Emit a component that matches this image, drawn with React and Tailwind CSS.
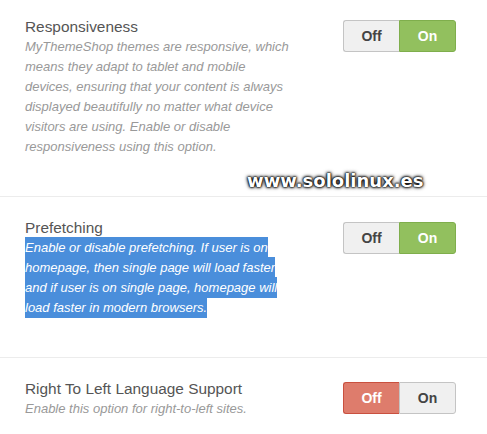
import React from "react";

function Toggle({ on }) {
  return (
    <div className="flex h-[32px] w-[113px] shrink-0 text-[14px] font-bold leading-none">
      <div
        className={
          on
            ? "flex w-[56px] items-center justify-center rounded-l-[3px] border border-r-0 border-[#c4c4c4] bg-[#f0f0f0] text-[#444]"
            : "flex w-[56px] items-center justify-center rounded-l-[3px] border border-r-0 border-[#c9503f] bg-[#de7c6c] text-white"
        }
      >
        Off
      </div>
      <div
        className={
          on
            ? "flex w-[57px] items-center justify-center rounded-r-[3px] border border-[#7fae4c] bg-[#92c05e] text-white"
            : "flex w-[57px] items-center justify-center rounded-r-[3px] border border-[#c4c4c4] bg-[#f0f0f0] text-[#444]"
        }
      >
        On
      </div>
    </div>
  );
}

export default function App() {
  return (
    <div
      className="relative h-[434px] w-[487px] overflow-hidden bg-white"
      style={{ fontFamily: '"Liberation Sans", Arial, sans-serif' }}
    >
      <div className="flex justify-between border-b border-[#ececec] pb-[39px] pl-[25px] pr-[31px] pt-[16px]">
        <div className="w-[268px]">
          <div className="text-[15.4px] leading-[21px] text-[#555]">Responsiveness</div>
          <div className="text-[13px] italic leading-[20px] text-[#999]">
            MyThemeShop themes are responsive, which means they adapt to tablet and mobile devices, ensuring that your content is always displayed beautifully no matter what device visitors are using. Enable or disable responsiveness using this option.
          </div>
        </div>
        <div className="mt-[4px]">
          <Toggle on />
        </div>
      </div>

      <div className="flex justify-between border-b border-[#ececec] pb-[39px] pl-[25px] pr-[31px] pt-[20px]">
        <div className="w-[268px]">
          <div className="text-[15.4px] leading-[21px] text-[#555]">Prefetching</div>
          <div className="text-[13px] italic leading-[20px] text-white">
            <span className="box-decoration-clone bg-[#4a8edb] py-[3px]">
              Enable or disable prefetching. If user is on homepage, then single page will load faster and if user is on single page, homepage will load faster in modern browsers.
            </span>
          </div>
        </div>
        <div className="mt-[5px]">
          <Toggle on />
        </div>
      </div>

      <div className="flex justify-between pl-[25px] pr-[31px] pt-[20px]">
        <div className="w-[268px]">
          <div className="text-[15.4px] leading-[21px] text-[#555]">Right To Left Language Support</div>
          <div className="text-[13px] italic leading-[20px] text-[#999]">
            Enable this option for right-to-left sites.
          </div>
        </div>
        <div className="mt-[4px]">
          <Toggle on={false} />
        </div>
      </div>

      <div
        className="absolute left-[247px] top-[170px] text-[18px] font-bold leading-[22px] text-white [text-shadow:0_0_1px_#000,0_0_2px_#000,0_0_3px_#000,0_0_4px_#000]"
        style={{ fontFamily: '"DejaVu Sans", sans-serif' }}
      >
        www.sololinux.es
      </div>
    </div>
  );
}
